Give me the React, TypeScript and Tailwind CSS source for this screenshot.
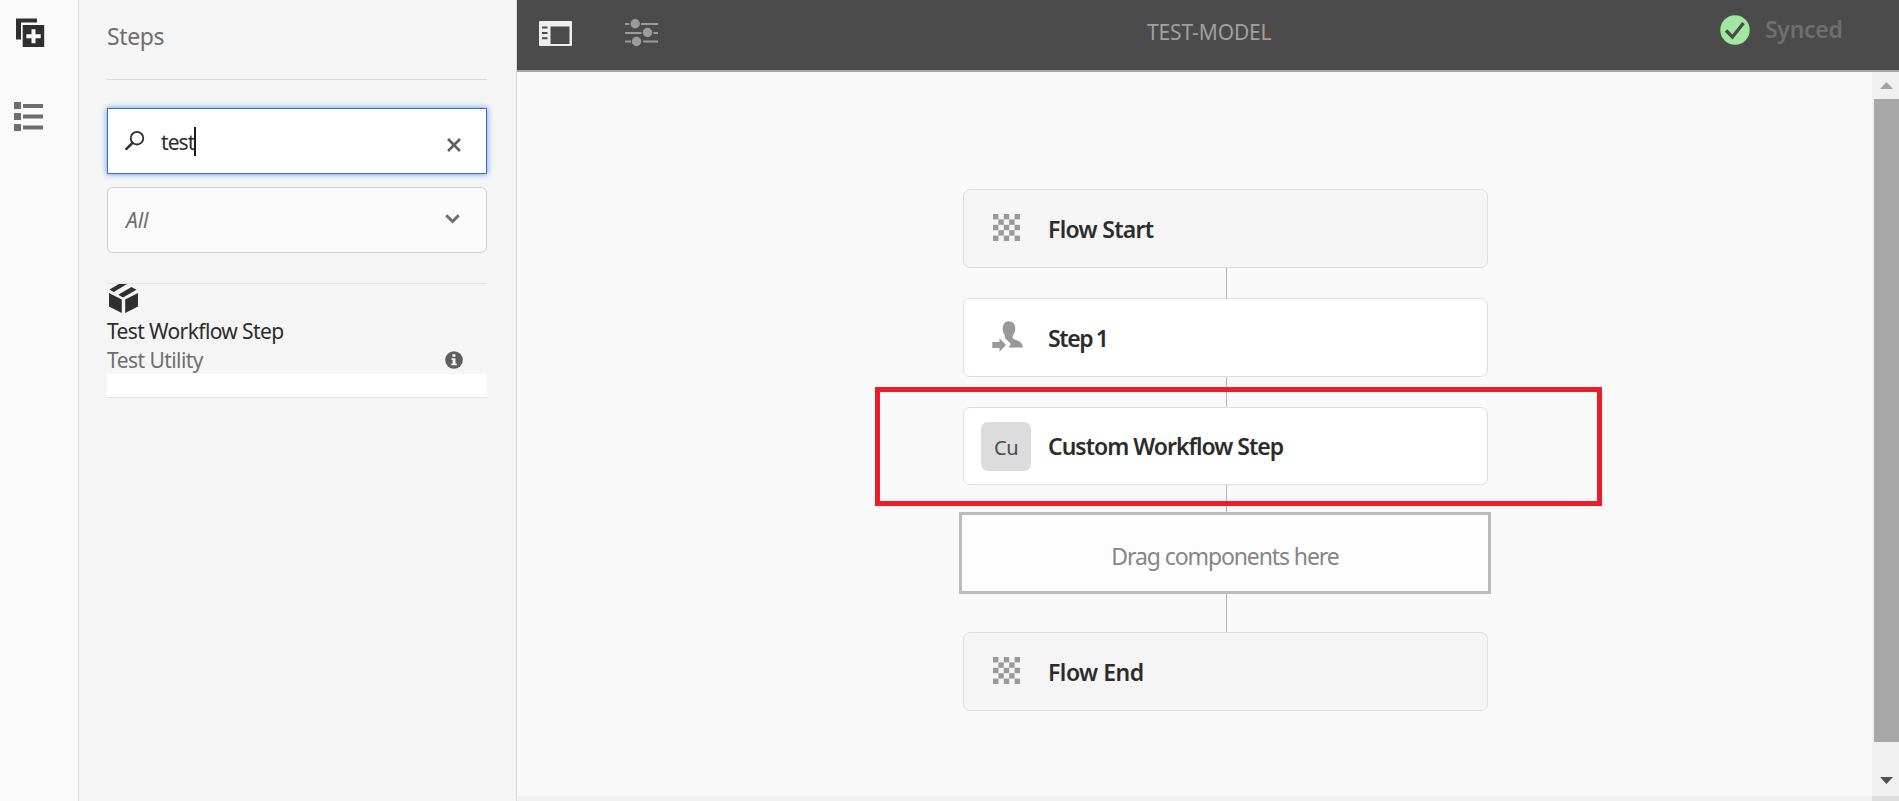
import type { ReactNode } from "react";

function CheckerIcon() {
  const cells: ReactNode[] = [];
  for (let r = 0; r < 5; r++) {
    for (let c = 0; c < 5; c++) {
      if ((r + c) % 2 === 0) {
        cells.push(<rect key={`${r}-${c}`} x={c * 5.4} y={r * 5.4} width="5.4" height="5.4" />);
      }
    }
  }
  return (
    <svg width="27" height="27" viewBox="0 0 27 27" fill="#999999" className="mb-0.5">
      {cells}
    </svg>
  );
}

function ParticipantIcon() {
  return (
    <svg width="31" height="31" viewBox="0 0 31 31" fill="#999999" className="mb-0.5 ml-0.5">
      <path d="M17 0.3c3.8 0 6.3 2.8 6.3 7 0 3-1.2 5.6-2.6 7.400v2.600c1.200 1 2.600 1.400 4.600 2.100 3.400 1.200 5.300 3.300 5.500 7H16.300l2.600-3.400-6-5.900v-2.600c-1.300-1.700-2.200-4.200-2.200-7.200 0-4.200 2.500-7 6.300-7z" />
      <path d="M0.300 21h7.200v-3.700L14 24l-6.500 6.700V27H0.300z" />
    </svg>
  );
}

function Connector({ className }: { className: string }) {
  return <div className={`ml-0.5 w-px bg-[#b5b5b5] ${className}`} />;
}

type StepCardProps = { icon: ReactNode; label: string; className: string; tracking: string };

function StepCard({ icon, label, className, tracking }: StepCardProps) {
  return (
    <div className={`flex w-[525px] items-center rounded-[7px] border border-[#dedede] pl-[17px] ${className}`}>
      <div className="flex w-[50px] shrink-0 items-center justify-center">{icon}</div>
      <span className={`ml-[17px] text-[23px] leading-8 font-semibold text-[#2c2c2c] ${tracking}`}>{label}</span>
    </div>
  );
}

function Rail() {
  return (
    <nav className="flex w-[79px] shrink-0 flex-col border-r border-[#dcdcdc] bg-[#fafafa] pt-[18px] pl-[14px]">
      <svg width="31" height="30" viewBox="0 0 31 30">
        <path d="M2 0.500h21v4H7v17H2z" fill="#2f2f2f" />
        <rect x="8.700" y="7" width="21.500" height="22" fill="#2f2f2f" />
        <path d="M19.500 11.200v14M12.300 18.200h14.400" stroke="#fafafa" strokeWidth="4" />
      </svg>
      <svg width="30" height="30" viewBox="0 0 30 30" fill="#6e6e6e" className="mt-[54px]">
        <path d="M0 0h7v7H0zM0 11h7v7H0zM0 22h7v7H0zM9 2h20v4H9zM9 12.500h20v4H9zM9 23.500h20v4H9z" />
      </svg>
    </nav>
  );
}

function StepsPanel() {
  return (
    <aside className="flex w-[438px] shrink-0 flex-col border-r border-[#d8d8d8] bg-[#f5f5f5] px-7">
      <h1 className="h-[79px] pt-5 text-[23px] leading-8 tracking-[-0.4px] text-[#6e6e6e]">Steps</h1>
      <div className="h-px w-[380px] bg-[#dcdcdc]" />
      <div className="mt-7 flex h-[66px] w-[380px] items-center border border-[#3c6fb4] bg-white pr-[25px] pl-[17px] shadow-[0_0_6px_#5a94ee]">
        <svg width="20" height="20" viewBox="0 0 20 20" fill="none" stroke="#2f2f2f">
          <circle cx="12" cy="7.200" r="6.300" strokeWidth="1.800" />
          <path d="M7.500 11.800L0.700 18.600" strokeWidth="2.500" />
        </svg>
        <span className="mt-0.5 ml-4 text-[21px] leading-8 tracking-[-0.9px] text-[#2c2c2c]">test</span>
        <span className="h-[29px] w-0.5 bg-[#1c1c1c]" />
        <svg width="14" height="14" viewBox="0 0 14 14" stroke="#5f5f5f" strokeWidth="2.600" className="mt-2 ml-auto">
          <path d="M1 1l12 12M13 1L1 13" />
        </svg>
      </div>
      <div className="mt-[13px] flex h-[66px] w-[380px] items-center justify-between rounded-[6px] border border-[#cfcfcf] bg-[#fafafa] pr-[26px] pl-[18px]">
        <span className="text-[21px] leading-8 tracking-[-0.1px] text-[#707070] italic">All</span>
        <svg width="15" height="10" viewBox="0 0 15 10" fill="none" stroke="#6e6e6e" strokeWidth="3" className="mb-0.5">
          <path d="M1.200 1.200l6.300 6.300 6.300-6.300" />
        </svg>
      </div>
      <div className="mt-[30px] h-px w-[380px] bg-[#e3e3e3]" />
      <div className="flex w-[380px] flex-col">
        <svg width="31" height="30" viewBox="0 0 31 30" fill="#2f2f2f" className="ml-px">
          <path d="M1.500 5.500L11 0h8L5.800 8z" />
          <path d="M10.200 10.700L23.500 3l5 2.700L15 13.500z" />
          <path d="M1 9l12.800 6.500V29L1 22.500zM30 9v13.500L17.200 29V15.500z" />
        </svg>
        <span className="mt-0.5 text-[21px] leading-[30px] tracking-[-0.62px] text-[#2c2c2c]">Test Workflow Step</span>
        <div className="flex h-7 items-center justify-between pr-6">
          <span className="text-[21px] leading-7 tracking-[-0.55px] text-[#6e6e6e]">Test Utility</span>
          <svg width="18" height="18" viewBox="0 0 18 18">
            <circle cx="9" cy="9" r="8.800" fill="#5f5f5f" />
            <path d="M7.300 3.200h3.200v2.600H7.300zM6.500 7.200h4v5.300h1.300v1.800H6.300v-1.800h1.300V9H6.500z" fill="#f5f5f5" />
          </svg>
        </div>
        <div className="h-6 border-b border-[#e3e3e3] bg-white" />
      </div>
    </aside>
  );
}

function Toolbar() {
  return (
    <header className="flex h-[72px] shrink-0 items-start border-b-2 border-[#a5a5a5] bg-[#4b4b4b]">
      <svg width="33" height="25" viewBox="0 0 33 25" className="mt-[21px] ml-[22px]">
        <rect width="33" height="25" rx="1" fill="#eeeeee" />
        <path d="M11.500 5.500H30.500V23h-19zM3 5.500h5.500v2H3zM3 11h5.500v2H3zM3 16.200h5.500v2H3z" fill="#4b4b4b" />
      </svg>
      <svg width="33" height="28" viewBox="0 0 33 28" fill="#9b9b9b" className="mt-[19px] ml-[53px]">
        <path d="M0 4h4.200v2H0zM16 4h17v2H16zM0 13h16.500v2H0zM28.500 13H33v2h-4.500zM0 21.500h6v2H0zM18 21.500h15v2H18z" />
        <circle cx="10.200" cy="4.700" r="4.700" />
        <circle cx="22.500" cy="13.500" r="4.700" />
        <circle cx="11.500" cy="22.500" r="4.700" />
      </svg>
      <span className="mt-4 ml-[489px] w-[300px] text-[21px] leading-8 tracking-[-0.15px] text-[#a0a0a0]">TEST-MODEL</span>
      <svg width="30" height="30" viewBox="0 0 30 30" className="mt-[15px] ml-[273px]">
        <circle cx="15" cy="15" r="14.700" fill="#a0e8a0" />
        <path d="M6 15.500l6.500 6.500L23.500 8" fill="none" stroke="#4b4b4b" strokeWidth="3.400" />
      </svg>
      <span className="mt-[13px] ml-[15px] text-[23px] leading-8 font-semibold tracking-[-0.3px] text-[#6f6f6f]">Synced</span>
    </header>
  );
}

function Scrollbar() {
  return (
    <div className="flex w-[27px] shrink-0 flex-col bg-[#f0f0f0]">
      <div className="flex h-[27px] items-start justify-center pt-2.5 pl-0.5">
        <svg width="13" height="7" viewBox="0 0 13 7" fill="#a3a3a3">
          <path d="M6.500 0L13 7H0z" />
        </svg>
      </div>
      <div className="ml-0.5 h-[643px] bg-[#a8a8a8]" />
      <div className="flex flex-1 items-end justify-center pb-3 pl-0.5">
        <svg width="13" height="7" viewBox="0 0 13 7" fill="#505050">
          <path d="M0 0h13L6.500 7z" />
        </svg>
      </div>
      <div className="h-[5px] bg-[#dcdcdc]" />
    </div>
  );
}

export default function App() {
  return (
    <div className="flex h-[801px] w-[1899px] overflow-hidden bg-[#f9f9f9] font-['Noto_Sans','Open_Sans',sans-serif]">
      <Rail />
      <StepsPanel />
      <main className="flex min-w-0 flex-1 flex-col">
        <Toolbar />
        <div className="flex min-h-0 flex-1">
          <div className="flex min-w-0 flex-1 flex-col border-b-[5px] border-[#f0f0f0]">
            <div className="relative ml-[358px] flex w-[727px] flex-1 flex-col items-center pt-[117px] pr-[26px]">
              <StepCard
                className="h-[79px] bg-[#f5f5f5]"
                label="Flow Start"
                tracking="tracking-[-0.7px]"
                icon={<CheckerIcon />}
              />
              <Connector className="h-[30px]" />
              <StepCard
                className="h-[79px] bg-white"
                label="Step 1"
                tracking="tracking-[-1.4px] [word-spacing:-1px]"
                icon={<ParticipantIcon />}
              />
              <Connector className="h-[30px]" />
              <StepCard
                className="h-[78px] bg-white"
                label="Custom Workflow Step"
                tracking="tracking-[-1px]"
                icon={
                  <div className="flex h-[49px] w-[50px] items-center justify-center rounded-[7px] bg-[#dcdcdc] pt-1 text-[20px] tracking-[-0.4px] text-[#4b4b4b]">
                    Cu
                  </div>
                }
              />
              <Connector className="h-[27px]" />
              <div className="mr-px flex h-[82px] w-[532px] items-center justify-center border-[3px] border-[#bcbcbc] bg-[#fdfdfd] pt-1.5 text-[23px] tracking-[-1.1px] text-[#858585]">
                Drag components here
              </div>
              <Connector className="h-[38px]" />
              <StepCard
                className="h-[79px] bg-[#f5f5f5]"
                label="Flow End"
                tracking="tracking-[-0.5px]"
                icon={<CheckerIcon />}
              />
              <div className="pointer-events-none absolute top-[315px] left-0 h-[119px] w-[727px] border-[5px] border-[#ec1c28]" />
            </div>
          </div>
          <Scrollbar />
        </div>
      </main>
    </div>
  );
}
